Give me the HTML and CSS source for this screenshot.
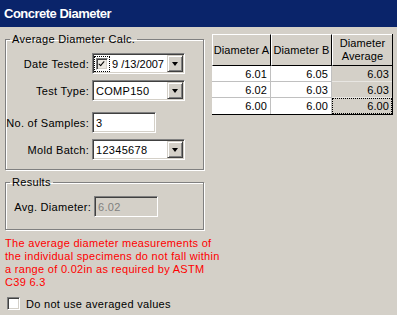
FILE: index.html
```html
<!DOCTYPE html>
<html lang="en">
<head>
  <meta charset="UTF-8" />
  <title>Concrete Diameter</title>
  <link rel="stylesheet" href="styles.css">
</head>
<body>

<header class="titlebar">Concrete Diameter</header>

<div class="main">
  <div class="left">
    <fieldset class="group calc">
      <legend>Average Diameter Calc.</legend>

      <div class="row first">
        <label>Date Tested:</label>
        <div class="field combo">
          <span class="focus"><span class="check on"></span></span>
          <span class="value date">9 /13/2007</span>
          <span class="drop"></span>
        </div>
      </div>

      <div class="row">
        <label>Test Type:</label>
        <div class="field combo">
          <span class="value">COMP150</span>
          <span class="drop"></span>
        </div>
      </div>

      <div class="row samples">
        <label>No. of Samples:</label>
        <div class="field text">
          <span class="value">3</span>
        </div>
      </div>

      <div class="row">
        <label>Mold Batch:</label>
        <div class="field combo">
          <span class="value">12345678</span>
          <span class="drop"></span>
        </div>
      </div>
    </fieldset>

    <fieldset class="group results">
      <legend>Results</legend>
      <div class="row first">
        <label>Avg. Diameter:</label>
        <div class="field text disabled">
          <span class="value">6.02</span>
        </div>
      </div>
    </fieldset>

    <p class="warning">The average diameter measurements of<br>the individual specimens do not fall within<br>a range of 0.02in as required by ASTM<br>C39 6.3</p>

    <div class="option">
      <span class="check"></span>
      <span>Do not use averaged values</span>
    </div>
  </div>

  <table class="grid">
    <thead>
      <tr>
        <th class="col-a">Diameter A</th>
        <th class="col-b">Diameter B</th>
        <th class="col-c">Diameter<br>Average</th>
      </tr>
    </thead>
    <tbody>
      <tr><td>6.01</td><td>6.05</td><td class="avg">6.03</td></tr>
      <tr><td>6.02</td><td>6.03</td><td class="avg">6.03</td></tr>
      <tr><td>6.00</td><td>6.00</td><td class="avg current">6.00</td></tr>
    </tbody>
  </table>
</div>

</body>
</html>
```

FILE: styles.css
```css
* {
  box-sizing: border-box;
}

body {
  margin: 0;
  width: 397px;
  height: 315px;
  overflow: hidden;
  background: #d4d0c8;
  font-family: "Liberation Sans", Arial, sans-serif;
  font-size: 11px;
  letter-spacing: 0.3px;
  color: #000;
}

.titlebar {
  height: 27px;
  line-height: 27px;
  padding-left: 4px;
  background: #0a246a;
  color: #fff;
  font-weight: bold;
  font-size: 13px;
  letter-spacing: -0.5px;
}

.main {
  display: flex;
  align-items: flex-start;
}

.left {
  width: 205px;
  flex-shrink: 0;
  padding-left: 5px;
}

/* etched group boxes */
.group {
  margin: 6px 0 0 0;
  padding: 0;
  border: 1px solid #808080;
  box-shadow: inset 1px 1px 0 #fff, 1px 1px 0 #fff;
  width: 199px;
}

.group legend {
  margin-left: 4px;
  padding: 0 2px;
  line-height: 13px;
}

.calc {
  height: 137px;
}

.results {
  height: 54px;
}

.row {
  display: flex;
  align-items: center;
  margin-top: 6px;
}

.row.first {
  margin-top: 7px;
}

.row.samples {
  margin-top: 11px;
}

.row label {
  width: 86px;
  padding-right: 3px;
  text-align: right;
  white-space: nowrap;
}

.results .row label {
  width: 88px;
}

/* sunken fields */
.field {
  height: 21px;
  display: flex;
  align-items: center;
  background: #fff;
  border: 1px solid;
  border-color: #808080 #fff #fff #808080;
  box-shadow: inset 1px 1px 0 #404040, inset -1px -1px 0 #d4d0c8;
  padding: 2px 2px 2px 3px;
}

.combo {
  width: 93px;
}

.text {
  width: 64px;
}

.field .value {
  flex: 1;
  min-width: 0;
  white-space: nowrap;
  overflow: hidden;
}

.field .date {
  letter-spacing: 0;
}

.disabled {
  background: #d4d0c8;
  color: #808080;
}

.drop {
  flex-shrink: 0;
  width: 16px;
  height: 17px;
  margin-right: -1px;
  background: #d4d0c8;
  border: 1px solid;
  border-color: #d4d0c8 #404040 #404040 #d4d0c8;
  box-shadow: inset 1px 1px 0 #fff, inset -1px -1px 0 #808080;
  position: relative;
}

.drop::after {
  content: "";
  position: absolute;
  left: 4px;
  top: 6px;
  border-left: 3.5px solid transparent;
  border-right: 3.5px solid transparent;
  border-top: 4px solid #000;
}

.focus {
  display: flex;
  flex-shrink: 0;
  padding: 1px;
  margin-left: -1px;
  margin-right: 3px;
  outline: 1px dotted #000;
}

.check {
  flex-shrink: 0;
  width: 13px;
  height: 13px;
  background: #fff;
  border: 1px solid;
  border-color: #808080 #fff #fff #808080;
  box-shadow: inset 1px 1px 0 #404040, inset -1px -1px 0 #d4d0c8;
  position: relative;
  display: inline-block;
}

.focus .check {
  width: 12px;
  height: 12px;
  background: #ece9e2;
}

.check.on::after {
  content: "";
  position: absolute;
  left: 3px;
  top: 1px;
  width: 2px;
  height: 5px;
  border: solid #000;
  border-width: 0 1.5px 1.5px 0;
  transform: rotate(40deg);
}

.warning {
  margin: 7px 0 0 0;
  color: #ff0000;
  line-height: 13px;
  white-space: nowrap;
}

.option {
  display: flex;
  align-items: center;
  gap: 6px;
  margin-top: 8px;
  padding-left: 2px;
}

/* data grid */
.grid {
  margin: 7px 0 0 7px;
  width: 181px;
  table-layout: fixed;
  border-collapse: separate;
  border-spacing: 0;
  border-right: 1px solid #000;
  border-bottom: 1px solid #000;
  letter-spacing: 0.1px;
}

.grid th {
  height: 32px;
  padding: 0;
  font-weight: normal;
  line-height: 13px;
  text-align: center;
  white-space: nowrap;
  overflow: hidden;
  background: #d4d0c8;
  border-top: 1px solid #fff;
  border-left: 1px solid #fff;
  border-right: 1px solid #000;
  border-bottom: 1px solid #000;
}

.grid th:last-child {
  border-right: none;
}

.col-a { width: 59px; }
.col-b { width: 61px; }
.col-c { width: 60px; }

.grid td {
  height: 16px;
  padding: 0 3px 0 0;
  text-align: right;
  background: #fff;
  border-right: 1px solid #c0c0c0;
  border-bottom: 1px solid #c0c0c0;
}

.grid tr:last-child td {
  border-bottom: none;
}

.grid td.avg {
  background: #d4d0c8;
  border-right: none;
  border-bottom-color: #e8e6e2;
}

.grid td.current {
  outline: 1px dotted #000;
  outline-offset: -1px;
}
```
